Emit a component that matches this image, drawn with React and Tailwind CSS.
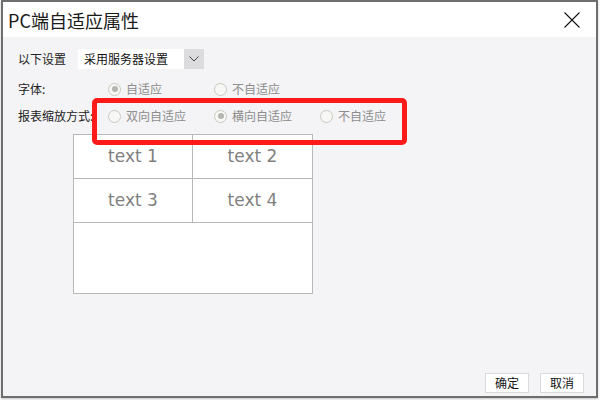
export default function App() {
  const cjk = { fontFamily: '"Noto Sans CJK SC", "Noto Sans", sans-serif' };

  const Radio = ({ checked, label }) => (
    <div className="flex w-[106px] items-center gap-[5px]">
      <span className="flex h-[13px] w-[13px] items-center justify-center rounded-full border border-[#c9c9c0] bg-[#f7f7f5]">
        {checked && <span className="h-[6px] w-[6px] rounded-full bg-[#b4b4b0]" />}
      </span>
      <span className="text-[12px] leading-[16px] text-[#8c8c8c]">{label}</span>
    </div>
  );

  return (
    <div className="h-[400px] w-[600px] bg-white" style={cjk}>
      <div className="relative ml-px flex h-[398px] w-[597px] flex-col border-2 border-[#6e6e6e] bg-[#f4f4f6] shadow-[0_1px_2px_rgba(0,0,0,0.25)]">
        <div className="flex h-[35px] items-center justify-between bg-white pl-[5px] pr-[16px]">
          <span className="text-[18px] leading-[22px] text-[#1a1a1a]">PC端自适应属性</span>
          <svg width="16" height="16" viewBox="0 0 16 16" className="mt-px">
            <path d="M0.5 0.5 L15.5 15.5 M15.5 0.5 L0.5 15.5" stroke="#111" strokeWidth="1.1" />
          </svg>
        </div>

        <div className="flex flex-1 flex-col pl-[15px]">
          <div className="mt-[12px] flex items-center gap-[12px]">
            <span className="text-[12px] text-[#222]">以下设置</span>
            <div className="flex h-[20px] w-[126px] items-center bg-white">
              <span className="flex-1 pl-[6px] text-[12px] leading-[20px] text-[#111]">采用服务器设置</span>
              <span className="flex h-[20px] w-[20px] items-center justify-center bg-[#dcdcdf]">
                <svg width="10" height="6" viewBox="0 0 10 6">
                  <path d="M0.5 0.5 L5 5 L9.5 0.5" stroke="#444" strokeWidth="1" fill="none" />
                </svg>
              </span>
            </div>
          </div>

          <div className="mt-[12px] flex items-center">
            <span className="w-[90px] text-[12px] leading-[16px] text-[#222]">字体:</span>
            <Radio checked label="自适应" />
            <Radio label="不自适应" />
          </div>

          <div className="mt-[11px] flex items-center">
            <span className="w-[90px] text-[12px] leading-[16px] text-[#222]">报表缩放方式:</span>
            <Radio label="双向自适应" />
            <Radio checked label="横向自适应" />
            <Radio label="不自适应" />
          </div>

          <div
            className="ml-[55px] mt-[10px] flex h-[160px] w-[240px] flex-col border border-[#b8b8b8] bg-white text-[17px] text-[#7f7f7f]"
            style={{ fontFamily: '"DejaVu Sans", sans-serif' }}
          >
            <div className="grid h-[44px] grid-cols-2 border-b border-[#b8b8b8]">
              <div className="flex items-center justify-center border-r border-[#b8b8b8]">text 1</div>
              <div className="flex items-center justify-center">text 2</div>
            </div>
            <div className="grid h-[44px] grid-cols-2 border-b border-[#b8b8b8]">
              <div className="flex items-center justify-center border-r border-[#b8b8b8]">text 3</div>
              <div className="flex items-center justify-center">text 4</div>
            </div>
          </div>

          <div className="flex-1" />

          <div className="flex justify-end gap-[11px] pb-[3px] pr-[12px]">
            <button className="h-[20px] w-[44px] border border-[#dadada] bg-white text-[12px] leading-[18px] text-[#111]">确定</button>
            <button className="h-[20px] w-[44px] border border-[#dadada] bg-white text-[12px] leading-[18px] text-[#111]">取消</button>
          </div>
        </div>

        <div className="pointer-events-none absolute left-[89px] top-[96px] h-[47px] w-[315px] rounded-[5px] border-[5px] border-[#ff1a1a]" />
      </div>
    </div>
  );
}
